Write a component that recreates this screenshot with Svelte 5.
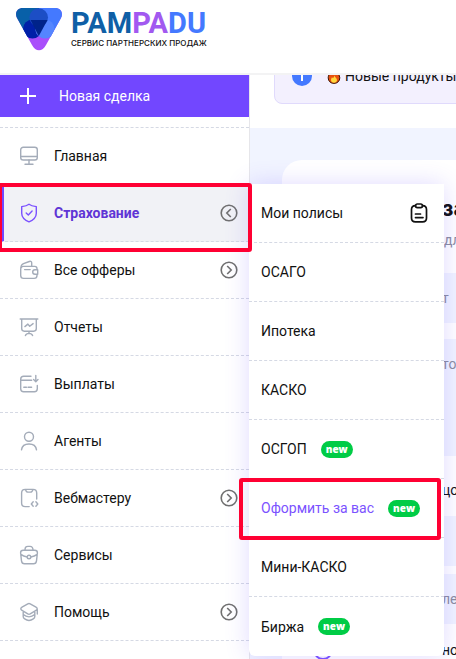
<script lang="ts">
  interface NavItem {
    label: string;
    icon: string;
    more?: boolean;
  }

  interface Product {
    label: string;
    isNew?: boolean;
    current?: boolean;
    policies?: boolean;
  }

  const items: NavItem[] = [
    { label: 'Главная', icon: 'monitor' },
    { label: 'Страхование', icon: 'shield', more: true },
    { label: 'Все офферы', icon: 'wallet', more: true },
    { label: 'Отчеты', icon: 'board' },
    { label: 'Выплаты', icon: 'card' },
    { label: 'Агенты', icon: 'user' },
    { label: 'Вебмастеру', icon: 'code', more: true },
    { label: 'Сервисы', icon: 'case' },
    { label: 'Помощь', icon: 'cap', more: true },
  ];

  const products: Product[] = [
    { label: 'Мои полисы', policies: true },
    { label: 'ОСАГО' },
    { label: 'Ипотека' },
    { label: 'КАСКО' },
    { label: 'ОСГОП', isNew: true },
    { label: 'Оформить за вас', isNew: true, current: true },
    { label: 'Мини-КАСКО' },
    { label: 'Биржа', isNew: true },
  ];

  let opened = $state('Страхование');

  function toggle(label: string) {
    opened = opened === label ? '' : label;
  }
</script>

{#snippet navIcon(name: string)}
  <svg class="nav-icon" viewBox="0 0 20 20" aria-hidden="true">
    {#if name === 'monitor'}
      <rect x="1.7" y="1.2" width="16.600" height="12.800" rx="2.600" />
      <path d="M1.700 10.500h16.600M10 14v4M6 18.300h8" />
    {:else if name === 'shield'}
      <path d="M10 1.200c1.800 1.400 4.200 2 7.300 2.400v6.600c0 4-3.200 6.900-7.300 8.700-4.100-1.800-7.300-4.700-7.300-8.700V3.600C5.800 3.200 8.200 2.600 10 1.200z" />
      <path d="M7.200 10l2.100 2 3.800-3.900" />
    {:else if name === 'wallet'}
      <path d="M18 9.500V8.600c0-1.300-.9-2.200-2.200-2.200H4.200A2.500 2.500 0 0 0 1.700 8.900v6.600c0 1.700 1.200 2.900 2.900 2.900h10.500c1.700 0 2.900-1.200 2.900-2.900v-.7" />
      <path d="M18.700 9.800v4.400h-2.800a2.200 2.200 0 0 1 0-4.400zM5.600 9.600h5.600M2 7.600C2 5 3 4.300 4.500 3.700l5.800-2.200c1.500-.6 2.400.2 2.400 1.600v3.200" />
    {:else if name === 'board'}
      <path d="M1.200 2h17.600M2.700 2v9.600c0 1.700.9 2.600 2.600 2.600h9.400c1.700 0 2.600-.9 2.600-2.600V2M10 14.200v2.400M6.400 18.600c.5-1.500 1.800-2.200 3.600-2.200s3.100.7 3.600 2.200" />
      <path d="M5.900 9.600l3-2.500 1.800 2.200 3.400-2.700" />
    {:else if name === 'card'}
      <path d="M12 2.300H4.700c-2 0-3 1-3 3v9.400c0 2 1 3 3 3h10.600c2 0 3-1 3-3v-3.200M1.700 6.300h11M4.800 13.300h2.600M9 13.300h3.600M16.800 1.500v6M14.600 5.600l2.200 2.200 2.200-2.200" />
    {:else if name === 'user'}
      <circle cx="10" cy="5.700" r="4.500" />
      <path d="M2.500 18.800c.5-3.700 3.400-5.800 7.500-5.800s7 2.100 7.500 5.800" />
    {:else if name === 'code'}
      <path d="M17.700 11V5c0-2.400-1.200-3.600-3.600-3.600H6.200C3.800 1.400 2.600 2.600 2.600 5v10c0 2.400 1.200 3.600 3.600 3.600h4M6.600 1.600c.3 1.800 1 2.500 2.400 2.500h2.400c1.400 0 2.100-.7 2.400-2.500M14.200 13.800l-1.900 2.200 1.900 2.200M16.900 13.800l1.900 2.200-1.900 2.200" />
    {:else if name === 'case'}
      <path d="M6 5.200C6 2.500 6.700 1.400 9 1.400h2c2.300 0 3 1.100 3 3.800" />
      <path d="M4.200 5.200h11.600c1.600 0 2.600 1 2.600 2.600l-.9 8c-.2 1.800-1.200 2.900-3 2.900h-9c-1.800 0-2.800-1.100-3-2.900l-.9-8c0-1.600 1-2.600 2.600-2.600zM1.800 9.400c1.900 1.500 4 2.300 6.300 2.600M18.200 9.400c-1.900 1.500-4 2.300-6.300 2.600" />
      <circle cx="10" cy="12" r="1.800" />
    {:else}
      <path d="M8.800 1.800a2.400 2.400 0 0 1 2.400 0l5.800 3.400c1.600.9 1.600 2.200 0 3.100l-5.800 3.600a2.400 2.400 0 0 1-2.400 0L3 8.300c-1.600-.9-1.600-2.200 0-3.100zM18.300 7.500v4.500M4.200 10v4.600c0 1 .6 1.800 1.500 2.300 2.700 2 5.900 2 8.600 0 .9-.5 1.500-1.300 1.500-2.300V10M4.400 12.600c3.200 3 8 3 11.200 0" />
    {/if}
  </svg>
{/snippet}

<div class="page">
  <header class="header">
    <a class="logo" href="#home">
      <svg class="logo-mark" viewBox="0 0 46 43" aria-hidden="true">
        <defs>
          <clipPath id="mark">
            <path d="M7 0h32c6 0 8.500 5 6 10L30 37c-3.500 7-10.500 7-14 0L1 10C-1.500 5 1 0 7 0z" />
          </clipPath>
        </defs>
        <g clip-path="url(#mark)">
          <rect width="46" height="43" fill="#a94ffb" />
          <path d="M0 0h23v12L12 29H0z" fill="#0860a8" />
          <path d="M23 0h23v29H34L23 12z" fill="#4479ff" />
          <circle cx="16.500" cy="21" r="9.500" fill="#001fa8" />
          <circle cx="29" cy="21" r="9.500" fill="#5585ff" />
          <path d="M23 28.500a9.500 9.500 0 0 1 0-15z" fill="#4166e0" />
          <circle cx="22.700" cy="9.500" r="9.300" fill="#1c4ec5" />
          <path d="M14.500 12h17l-8.700 16z" fill="#00238a" />
        </g>
      </svg>
      <span class="logo-text">
        <span class="logo-name"><span class="c-blue">PAM</span><span class="c-violet">PA</span><span class="c-sky">DU</span></span>
        <span class="logo-sub">СЕРВИС ПАРТНЕРСКИХ ПРОДАЖ</span>
      </span>
    </a>
  </header>

  <div class="body">
    <aside class="sidebar">
      <button class="new-deal" type="button">
        <svg viewBox="0 0 18 18" aria-hidden="true"><path d="M9 1v16M1 9h16" /></svg>
        Новая сделка
      </button>

      <ul class="nav">
        {#each items as item}
          <li class="nav-item" class:active={item.icon === 'shield'}>
            <a class="nav-link" href="#{item.icon}">
              {@render navIcon(item.icon)}
              {item.label}
            </a>
            {#if item.more}
              <button class="toggle" type="button" aria-label={item.label} onclick={() => toggle(item.label)}>
                <svg viewBox="0 0 18 18" aria-hidden="true">
                  <circle cx="9" cy="9" r="7.800" />
                  <path d={opened === item.label ? 'M10.800 5L6.800 9l4 4' : 'M7.200 5l4 4-4 4'} />
                </svg>
              </button>
            {/if}

            {#if item.icon === 'shield' && opened === item.label}
              <ul class="submenu">
                {#each products as product}
                  <li class="submenu-item" class:current={product.current}>
                    <a href="#product">{product.label}</a>
                    {#if product.isNew}
                      <span class="badge">new</span>
                    {/if}
                    {#if product.policies}
                      <svg class="clipboard" viewBox="0 0 18 20" aria-hidden="true">
                        <path d="M5.500 2.600C2.800 2.700 1.500 4 1.500 6.500v8.400c0 2.600 1.300 3.900 3.900 3.900h7.200c2.600 0 3.900-1.300 3.900-3.900V6.500c0-2.500-1.300-3.800-4-3.900" />
                        <rect x="5.500" y="1" width="7" height="3.600" rx="1.800" />
                        <path d="M5.500 11h5M5.500 14.600h7.500" />
                      </svg>
                    {/if}
                  </li>
                {/each}
              </ul>
              <div class="frame"></div>
            {/if}
          </li>
        {/each}
      </ul>
    </aside>

    <main class="main">
      <div class="banner-area">
        <div class="banner">
          <svg class="info" viewBox="0 0 20 20" aria-hidden="true">
            <circle cx="10" cy="10" r="10" fill="#4479ff" />
            <path d="M10 5v1.500M10 9v6" stroke="#fff" stroke-width="2" />
          </svg>
          <svg class="fire" viewBox="0 0 14 16" aria-hidden="true">
            <path d="M7 .5c.5 3 5.800 4.500 5.800 9.300 0 3.200-2.300 5.600-5.800 5.600S1.200 13 1.200 9.800c0-2.300 1.300-3.600 1.800-5.200l1.700 2C6 5 6.800 3 7 .5z" fill="#e8500f" stroke="#3a1605" />
            <path d="M7.400 7.500c.3 1.800 2.600 2.400 2.600 4.500 0 1.600-1.200 2.700-3 2.700s-3-1.100-3-2.700c0-1.200.6-1.900 1-2.700l1 1c.8-.8 1.200-1.600 1.400-2.800z" fill="#ffd83d" />
          </svg>
          Новые продукты
        </div>
      </div>

      <section class="content">
        <div class="card">
          <h2>за</h2>
          <p>для</p>
          <div class="field">т</div>
          <div class="field tall">то</div>
          <div class="caption">цо</div>
          <div class="field">&nbsp;</div>
          <div class="field close">ле</div>
          <div class="option">
            <svg class="ring" viewBox="0 0 20 20" aria-hidden="true"><circle cx="10" cy="10" r="9" /></svg>
            <span>но</span>
          </div>
        </div>
      </section>
    </main>
  </div>
</div>

<style>
  :global(body) {
    margin: 0;
    background: #fff;
  }

  .page {
    height: 100vh;
    display: flex;
    flex-direction: column;
    overflow: hidden;
    font-family: Roboto, 'Liberation Sans', sans-serif;
    font-size: 14px;
    line-height: 20px;
    color: #111;
  }

  a {
    color: inherit;
    text-decoration: none;
  }

  ul {
    list-style: none;
    margin: 0;
    padding: 0;
  }

  button {
    border: 0;
    padding: 0;
    font: inherit;
    cursor: pointer;
  }

  svg {
    flex: none;
  }

  .header {
    flex: none;
    padding: 8px 16px 14px;
    border-bottom: 2px solid #f3f3f4;
  }

  .logo {
    display: flex;
    gap: 9px;
    height: 51px;
  }

  .logo-mark {
    width: 46px;
    height: 43px;
  }

  .logo-text {
    display: flex;
    flex-direction: column;
    white-space: nowrap;
  }

  .logo-name {
    font-size: 29px;
    line-height: 30px;
    font-weight: 700;
  }

  .c-blue {
    color: #0f5fa6;
  }

  .c-violet {
    color: #a259f0;
  }

  .c-sky {
    color: #4479ff;
  }

  .logo-sub {
    font-family: Inter, sans-serif;
    font-size: 8px;
    line-height: 10px;
    font-weight: 500;
  }

  .body {
    flex: 1;
    display: flex;
    min-height: 0;
  }

  .sidebar {
    position: relative;
    z-index: 1;
    flex: none;
    box-sizing: border-box;
    width: 250px;
    border-right: 1px solid #e6e6ea;
    background: #fff;
  }

  .new-deal {
    display: flex;
    align-items: center;
    gap: 22px;
    width: 100%;
    height: 42px;
    padding: 0 19px;
    background: #7247ff;
    color: #fff;
  }

  .new-deal svg {
    width: 18px;
    height: 18px;
    fill: none;
    stroke: #fff;
    stroke-width: 2;
  }

  .nav {
    margin-top: 10px;
    border-top: 1px dashed #d5d9e4;
  }

  .nav-item {
    position: relative;
    display: flex;
    align-items: center;
    box-sizing: border-box;
    height: 57px;
    padding: 0 11px 0 19px;
    border-bottom: 1px dashed #d5d9e4;
  }

  .nav-link {
    flex: 1;
    display: flex;
    align-items: center;
    gap: 15px;
  }

  .nav-icon {
    width: 20px;
    height: 20px;
    fill: none;
    stroke: #a4acb9;
    stroke-width: 1.4;
    stroke-linecap: round;
    stroke-linejoin: round;
  }

  .nav-item.active {
    padding-left: 15px;
    border-left: 4px solid #7247ff;
    background: #f1f2f6;
  }

  .active .nav-link {
    color: #5f35d5;
    font-weight: 700;
  }

  .active .nav-icon {
    stroke: #7b52ff;
  }

  .toggle {
    display: flex;
    background: none;
  }

  .toggle svg {
    width: 18px;
    height: 18px;
    fill: none;
    stroke: #707070;
    stroke-width: 1.6;
  }

  .submenu {
    position: absolute;
    z-index: 2;
    top: -1px;
    left: 100%;
    width: 195px;
    background: #fff;
    border-radius: 0 0 6px 6px;
    box-shadow: 0 0 24px rgba(100, 70, 255, 0.2);
  }

  .submenu-item {
    display: flex;
    align-items: center;
    gap: 14px;
    box-sizing: border-box;
    height: 59px;
    padding: 0 16px 0 12px;
    border-bottom: 1px dashed #d5d9e4;
    white-space: nowrap;
  }

  .submenu-item:last-child {
    border-bottom: 0;
  }

  .submenu-item.current {
    position: relative;
    color: #7b52ff;
  }

  .clipboard {
    width: 18px;
    height: 20px;
    margin-left: auto;
    fill: none;
    stroke: #111;
    stroke-width: 1.7;
    stroke-linecap: round;
  }

  .badge {
    padding: 0 5px;
    border-radius: 9px;
    background: #00cc46;
    color: #fff;
    font-family: 'Open Sans', sans-serif;
    font-size: 10px;
    line-height: 17px;
    font-weight: 800;
  }

  /* red highlights around the open section and the current product */
  .frame,
  .submenu-item.current::after {
    position: absolute;
    border: 4px solid #ff0033;
    border-radius: 3px;
    pointer-events: none;
  }

  .frame {
    z-index: 3;
    inset: -2px -3px -11px -6px;
  }

  .submenu-item.current::after {
    content: '';
    inset: -1px 3px -3px -10px;
  }

  .main {
    flex: 1;
    min-width: 0;
    display: flex;
    flex-direction: column;
    overflow: hidden;
  }

  .banner-area {
    padding: 0 0 24px 24px;
  }

  .banner {
    display: flex;
    align-items: center;
    box-sizing: border-box;
    height: 56px;
    margin: -27px -24px 0 0;
    padding-left: 17px;
    border: 1px solid #e0dafc;
    border-radius: 8px;
    background: #f3f0fe;
    white-space: nowrap;
  }

  .info {
    width: 20px;
    height: 20px;
    margin-right: 15px;
  }

  .fire {
    width: 14px;
    height: 16px;
    margin-right: 4px;
  }

  .content {
    flex: 1;
    padding: 32px 0 0 32px;
    background: #f1f4ff;
  }

  .card {
    display: flex;
    flex-direction: column;
    padding: 34px 0 24px 24px;
    border-radius: 20px 0 0 0;
    background: #fff;
    white-space: nowrap;
  }

  h2 {
    margin: 0;
    padding-left: 136px;
    font-family: Inter, sans-serif;
    font-size: 22px;
    line-height: 28px;
    font-weight: 700;
  }

  p {
    margin: 8px 0 23px;
    padding-left: 138px;
    color: #8b8d9e;
  }

  .field {
    margin-bottom: 16px;
    padding: 15px 0 15px 136px;
    background: #f1f4ff;
    color: #8b8d9e;
  }

  .tall {
    min-height: 87px;
    margin-bottom: 24px;
  }

  .caption {
    margin-bottom: 16px;
    padding-left: 136px;
  }

  .close {
    margin-top: -8px;
  }

  .option {
    display: flex;
    align-items: center;
    padding-left: 7px;
  }

  .ring {
    width: 20px;
    height: 20px;
    margin-right: 109px;
    fill: none;
    stroke: #7b52ff;
    stroke-width: 2;
  }
</style>
